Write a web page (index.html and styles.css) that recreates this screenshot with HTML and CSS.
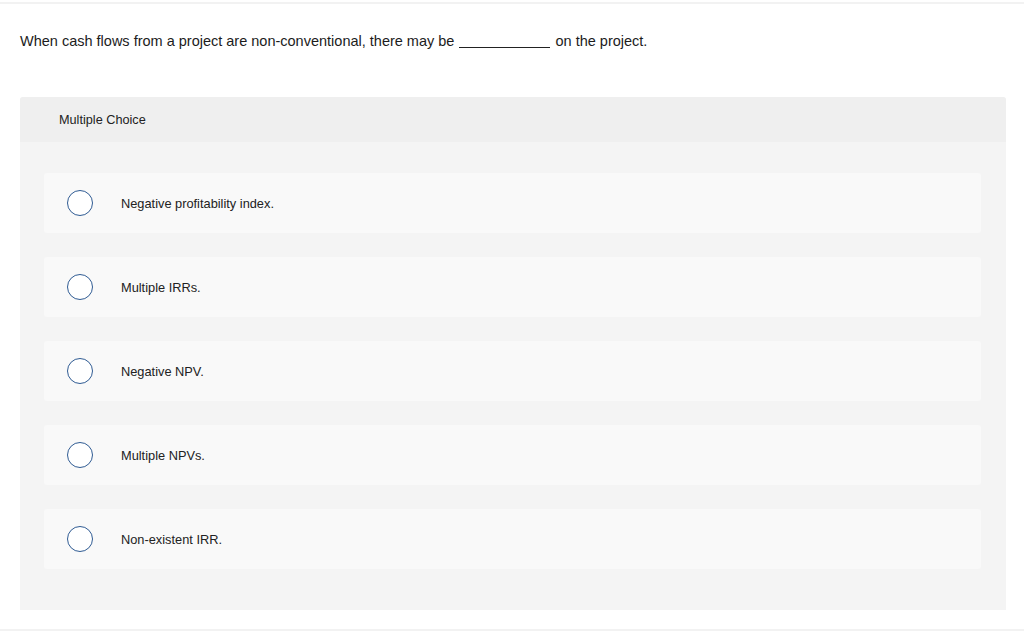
FILE: index.html
```html
<!DOCTYPE html>
<html>
<head>
<meta charset="utf-8">
<link rel="stylesheet" href="styles.css">
</head>
<body>
<div class="page">
  <div class="rule-top"></div>
  <p class="question">When cash flows from a project are non-conventional, there may be <span class="blank"></span> on the project.</p>
  <div class="panel">
    <div class="panel-head">Multiple Choice</div>
    <div class="panel-body">
      <div class="option"><span class="radio"></span><span class="label">Negative profitability index.</span></div>
      <div class="option"><span class="radio"></span><span class="label">Multiple IRRs.</span></div>
      <div class="option"><span class="radio"></span><span class="label">Negative NPV.</span></div>
      <div class="option"><span class="radio"></span><span class="label">Multiple NPVs.</span></div>
      <div class="option"><span class="radio"></span><span class="label">Non-existent IRR.</span></div>
    </div>
  </div>
  <div class="rule-bottom"></div>
</div>
</body>
</html>
```
FILE: styles.css
```css
html, body {
  margin: 0;
  padding: 0;
  background: #ffffff;
}
body {
  font-family: "Liberation Sans", Arial, sans-serif;
  color: #1a1a1a;
}
.page {
  width: 1024px;
  height: 632px;
  display: flex;
  flex-direction: column;
}
.rule-top {
  margin-top: 2px;
  height: 2px;
  background: #f2f2f2;
}
.question {
  margin: 28px 0 0 20px;
  font-size: 14.5px;
  line-height: 18px;
  color: #1c1c1c;
}
.blank {
  display: inline-block;
  width: 91px;
  border-bottom: 1px solid #222;
  vertical-align: -2px;
  margin: 0 1px;
}
.panel {
  margin: 47px 18px 0 20px;
  background: #f4f4f4;
  border-radius: 3px 3px 0 0;
  height: 513px;
  display: flex;
  flex-direction: column;
}
.panel-head {
  height: 45px;
  background: #efefef;
  border-radius: 3px 3px 0 0;
  display: flex;
  align-items: center;
  padding-left: 39px;
  font-size: 12.7px;
  color: #222;
}
.panel-body {
  padding: 31px 25px 41px 24px;
  display: flex;
  flex-direction: column;
  gap: 24px;
}
.option {
  height: 60px;
  background: #f9f9f9;
  border-radius: 3px;
  display: flex;
  align-items: center;
  padding-left: 23px;
}
.radio {
  width: 24px;
  height: 24px;
  border: 1px solid #2f5b93;
  border-radius: 50%;
  background: #ffffff;
  flex: none;
}
.label {
  margin-left: 28px;
  font-size: 12.8px;
  color: #222;
}
.rule-bottom {
  margin-top: auto;
  margin-bottom: 1px;
  height: 2px;
  background: #f2f2f2;
}
```
